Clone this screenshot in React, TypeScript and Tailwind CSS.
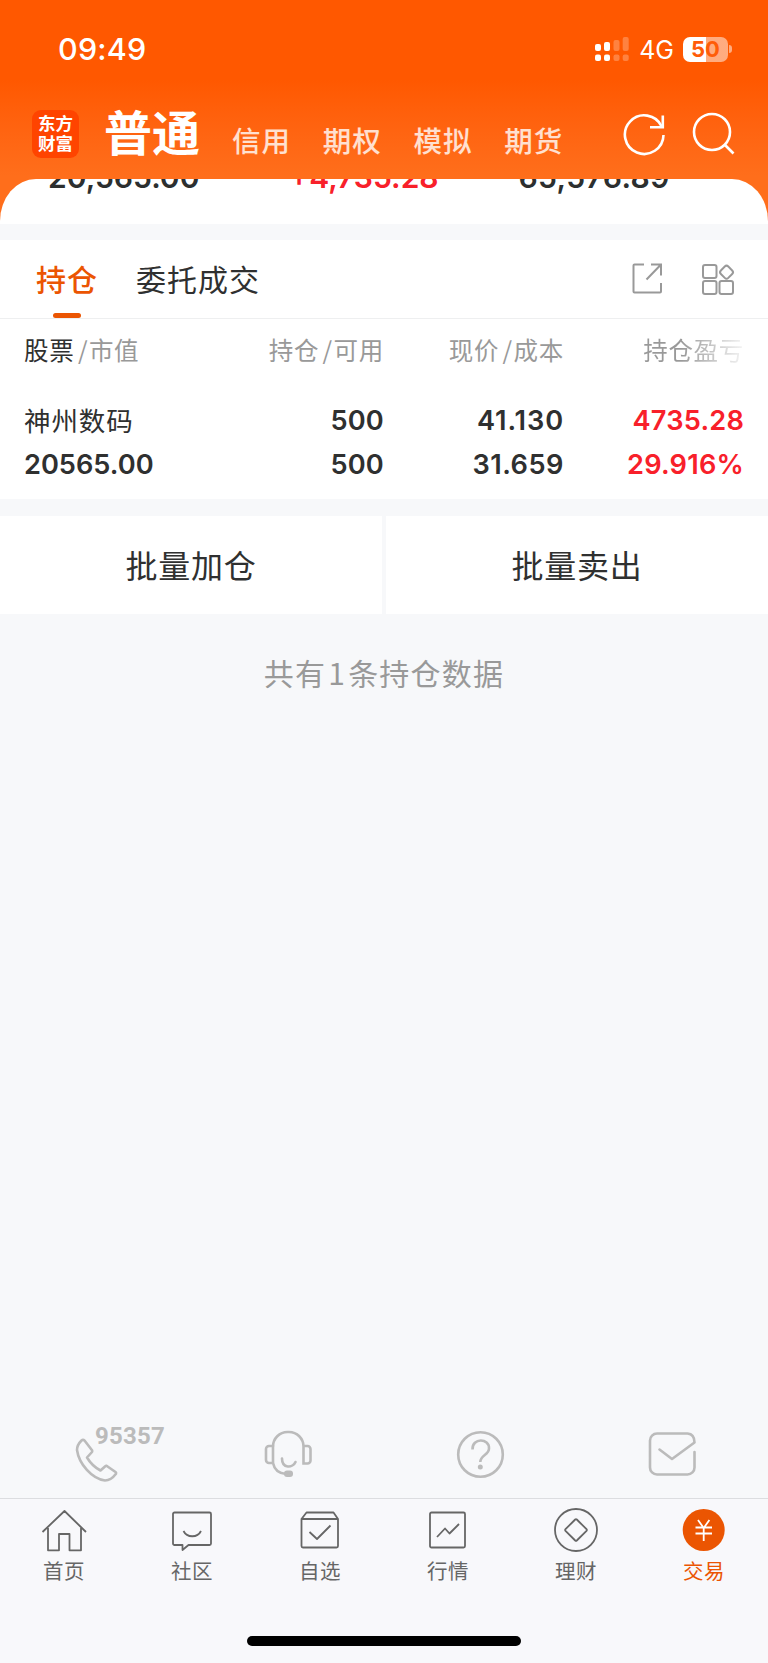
import type { ReactNode } from 'react';

const cjk = "font-['Noto_Sans_CJK_SC',sans-serif]";
const num = "font-['Inter','Noto_Sans_CJK_SC',sans-serif]";

interface Position {
  name: string;
  marketValue: string;
  amount: string;
  available: string;
  price: string;
  cost: string;
  profit: string;
  profitRate: string;
}

const positions: Position[] = [
  {
    name: '神州数码',
    marketValue: '20565.00',
    amount: '500',
    available: '500',
    price: '41.130',
    cost: '31.659',
    profit: '4735.28',
    profitRate: '29.916%',
  },
];

const accountTabs = ['信用', '期权', '模拟', '期货'];

const StatusBar = () => (
  <div className={`${num} flex h-[98px] items-center pl-[58px] pr-[36px] text-white`}>
    <span className="text-[30.500px] font-medium leading-none tracking-[0.200px]">09:49</span>
    <svg className="ml-auto" width="34" height="26" viewBox="0 0 34 26" fill="#fff">
      <rect x="0" y="8" width="6" height="7" rx="2" />
      <rect x="0" y="18.500" width="6" height="6.500" rx="2" />
      <rect x="9" y="6" width="6" height="9" rx="2" />
      <rect x="9" y="18.500" width="6" height="6.500" rx="2" />
      <g opacity="0.25">
        <rect x="18.500" y="4" width="6" height="11" rx="2" />
        <rect x="18.500" y="18.500" width="6" height="6.500" rx="2" />
        <rect x="27.700" y="1" width="6" height="14" rx="2" />
        <rect x="27.700" y="18.500" width="6" height="6.500" rx="2" />
      </g>
    </svg>
    <span className="ml-[10px] mt-[2px] text-[25px] leading-none">4G</span>
    <div className="ml-[9px] flex h-[25px] w-[45px] items-center justify-center overflow-hidden rounded-[7px] bg-linear-to-r from-white from-50% to-white/50 to-50% text-[22px] font-bold leading-none text-[#ff5c08]">
      50
    </div>
    <div className="ml-[1px] h-[8px] w-[3px] rounded-r-full bg-white/50" />
  </div>
);

const Header = () => (
  <div className="h-[224px] bg-linear-to-b from-[#ff5800] from-[80px] to-[#ff6e1b] to-[176px]">
    <StatusBar />
    <div className={`${cjk} flex h-[81px] pl-[32px] text-white`}>
      <div className="mt-[12px] flex h-[48px] w-[47px] flex-col items-center justify-center rounded-[9px] bg-[#ff4400] pb-[2px] text-[17.500px] font-bold leading-[20px]">
        <span>东方</span>
        <span>财富</span>
      </div>
      <span className="ml-[25px] text-[48px] font-bold leading-[64px]">普通</span>
      <div className="ml-[32px] flex gap-[31.700px] text-[28.500px] font-medium leading-[84px] tracking-[1px] text-white/80">
        {accountTabs.map((tab) => (
          <span key={tab}>{tab}</span>
        ))}
      </div>
      <svg className="ml-auto mr-[33px] mt-[12px]" width="112" height="46" viewBox="0 0 112 46" fill="none" stroke="#fff" strokeWidth="2.600">
        <path d="M38.700 16.500A19.300 19.300 0 1 0 40.500 25" />
        <path d="M39.800 5.500v11.800H27" />
        <circle cx="89" cy="22" r="18" />
        <path d="M101.500 34.500l9 9" />
      </svg>
    </div>
    <div className={`${num} relative h-[45px] overflow-hidden rounded-t-[36px_42px] bg-white text-[30px] font-semibold text-[#2c2f2f]`}>
      <div className="-mt-[22px] flex leading-[40px]">
        <span className="ml-[48px] w-[241px]">20,565.00</span>
        <span className="w-[229.500px] text-[#f8202a]">+4,735.28</span>
        <span className="tracking-[0.400px]">65,576.89</span>
      </div>
    </div>
  </div>
);

const PositionTabs = () => (
  <div className={`${cjk} mt-[16px] flex h-[79px] border-b border-[#eeeff0] bg-white pl-[36px] text-[30px] tracking-[1px]`}>
    <div className="flex flex-col items-center">
      <span className="h-[72.500px] font-medium leading-[76px] text-[#eb5502]">持仓</span>
      <span className="mr-[1px] h-[5.500px] w-[28px] shrink-0 rounded-[3px] bg-[#eb5502]" />
    </div>
    <span className="ml-[38px] leading-[76px] text-[#2f3030]">委托成交</span>
    <svg className="ml-auto mr-[32px] mt-[21px]" width="105" height="36" viewBox="0 0 105 36" fill="none" stroke="#999" strokeWidth="2">
      <path d="M13 3.500H3.500a1 1 0 0 0-1 1V30.500a1 1 0 0 0 1 1H29a1 1 0 0 0 1-1V22" />
      <path d="M20 3.500h10v11M30 3.500L15.500 18.500" />
      <rect x="72" y="4" width="13.500" height="13" rx="2" />
      <rect x="72" y="20" width="13.500" height="13" rx="2" />
      <rect x="88.500" y="20" width="13.500" height="13" rx="2" />
      <rect x="90.300" y="6" width="10.500" height="10.500" rx="2.500" transform="rotate(45 95.600 11.200)" />
    </svg>
  </div>
);

const Slash = () => <span className="pl-[3.500px] pr-[0.700px]">/</span>;

const PositionTable = () => (
  <div className={`${cjk} h-[180px] bg-white px-[24px] text-[26px] text-[#2f3030]`}>
    <div className="grid h-[66px] grid-cols-[180px_180px_180px_180px] text-[24.500px] leading-[62px] tracking-[0.700px] text-[#999]">
      <span>
        <span className="text-[#2f3030]">股票</span>
        <Slash />市值
      </span>
      <span className="text-right">
        持仓<Slash />可用
      </span>
      <span className="text-right">
        现价<Slash />成本
      </span>
      <span className="bg-linear-to-r from-[#999] from-[65%] to-[#999]/10 bg-clip-text text-right text-transparent">
        持仓盈亏
      </span>
    </div>
    {positions.map((p) => (
      <div
        key={p.name}
        className={`${num} mt-[14px] grid grid-cols-[180px_180px_180px_180px] text-right text-[27.200px] font-semibold leading-[44px] tracking-[0.200px]`}
      >
        <span className={`${cjk} -mt-[1px] text-left text-[26.500px] font-normal tracking-[0.900px]`}>{p.name}</span>
        <span>{p.amount}</span>
        <span className="tracking-[0.900px]">{p.price}</span>
        <span className="text-[#f8202a]">{p.profit}</span>
        <span className="text-left tracking-normal">{p.marketValue}</span>
        <span>{p.available}</span>
        <span className="tracking-[0.500px]">{p.cost}</span>
        <span className="text-[#f8202a]">{p.profitRate}</span>
      </div>
    ))}
  </div>
);

const BatchActions = () => (
  <div className={`${cjk} mt-[17px] grid h-[98px] grid-cols-2 gap-[4px] text-center text-[32px] leading-[96px] tracking-[0.700px] text-[#2f3030]`}>
    <span className="bg-white">批量加仓</span>
    <span className="bg-white">批量卖出</span>
  </div>
);

const ServiceBar = () => (
  <div className="mt-auto grid h-[86px] grid-cols-4 border-b border-[#dcdde0] text-[#bbb]">
    <div className="relative">
      <svg className="absolute left-[74px] top-[24px]" width="46" height="46" viewBox="0 0 46 46" fill="none" stroke="currentColor" strokeWidth="2.600" strokeLinejoin="round">
        <path d="M7.500 3.500Q3 8 3 13C5 27 18 42 31 43.500Q37 43.500 42 36.800Q42.500 36 41.500 35L32.500 28.800Q31.500 28.500 31 29.500L26.500 33.500Q18 29 13 20.500L18 15Q18.500 14.200 18 13.200L10.500 3.500Q9 2.200 7.500 3.500Z" />
      </svg>
      <span className="absolute left-[95px] top-[10px] font-['Roboto',sans-serif] text-[24px] font-bold leading-[26px] tracking-[0.200px]">
        95357
      </span>
    </div>
    <svg className="ml-[72px] mt-[16px]" width="50" height="50" viewBox="0 0 50 50" fill="none" stroke="currentColor" strokeWidth="2.600" strokeLinecap="round">
      <path d="M9 33V17.500A14.500 14.500 0 0 1 23.500 3H25A14.500 14.500 0 0 1 39.500 17.500V34.500H43.500A3 3 0 0 0 46.500 31.500V20A3 3 0 0 0 43.500 17H39.500" />
      <path d="M9 17H5A3 3 0 0 0 2 20V31A3 3 0 0 0 5 34H9Q11 44 22 45" />
      <path d="M18 29.500C18 40 29 39 31.500 33" />
      <rect x="20" y="41.500" width="9" height="6.500" rx="3" fill="currentColor" stroke="none" />
    </svg>
    <svg className="ml-[72px] mt-[16px]" width="50" height="50" viewBox="0 0 50 50" fill="none" stroke="currentColor" strokeWidth="2.600">
      <circle cx="24.500" cy="25.500" r="22.300" />
      <path d="M16.500 20.500C16 8.500 33.500 9 33 19.500 33 26 24.300 26 24.300 33" />
      <circle cx="24.300" cy="38" r="2.500" fill="currentColor" stroke="none" />
    </svg>
    <svg className="ml-[72px] mt-[16px]" width="50" height="50" viewBox="0 0 50 50" fill="none" stroke="currentColor" strokeWidth="2.600" strokeLinecap="round" strokeLinejoin="round">
      <path d="M46.500 23V38.500a7 7 0 0 1-7 7H9a7 7 0 0 1-7-7V11.500a7 7 0 0 1 7-7H39.500Q46.500 5 46.500 13.500L24 30 11.500 20.500" />
    </svg>
  </div>
);

const navItems: { label: string; icon: ReactNode; active?: boolean }[] = [
  {
    label: '首页',
    icon: <path d="M2.500 24L24.500 3 46 24M8 20V42.300H19V26H29.500V42.300H41V20" />,
  },
  {
    label: '社区',
    icon: (
      <>
        <path d="M6.500 4.500H41.500a1.500 1.500 0 0 1 1.500 1.500V35.500a1.500 1.500 0 0 1-1.500 1.500H20.500L14.500 42V37H6.500A1.500 1.500 0 0 1 5 35.500V6A1.500 1.500 0 0 1 6.500 4.500Z" />
        <path d="M15.500 23C19 30 29.500 30 33 23" />
      </>
    ),
  },
  {
    label: '自选',
    icon: (
      <>
        <path d="M5.500 11L10.500 4.500H37.500L42 11M5.500 11H42V38a1.500 1.500 0 0 1-1.500 1.500H7A1.500 1.500 0 0 1 5.500 38Z" />
        <path d="M13.500 24L21 31 34.500 17.500" />
      </>
    ),
  },
  {
    label: '行情',
    icon: (
      <>
        <rect x="6" y="4.500" width="35" height="35" rx="1.500" />
        <path d="M13 29L21 20.500 25.500 25.500 35 16" />
      </>
    ),
  },
  {
    label: '理财',
    icon: (
      <>
        <circle cx="24" cy="22" r="21" />
        <path d="M23.200 11.500L13.500 21.200a1.200 1.200 0 0 0 0 1.600L23.200 32.500a1.200 1.200 0 0 0 1.600 0L34.500 22.800a1.200 1.200 0 0 0 0-1.600L24.800 11.500a1.200 1.200 0 0 0-1.600 0Z" />
      </>
    ),
  },
  {
    label: '交易',
    active: true,
    icon: (
      <>
        <circle cx="23.700" cy="22" r="21" fill="#eb5502" stroke="none" />
        <path d="M18 12L23.700 20 29.400 12M15.500 19.500H32M15.500 25.500H32M23.700 19.500V33" stroke="#fff" />
      </>
    ),
  },
];

const BottomNav = () => (
  <div className={`${cjk} h-[164px] bg-[#f8f8fb]`}>
    <div className="grid h-[137px] grid-cols-6">
      {navItems.map((item) => (
        <div
          key={item.label}
          className={`flex flex-col items-center ${item.active ? 'text-[#eb5502]' : 'text-[#666]'}`}
        >
          <svg className="mt-[9px]" width="48" height="46" viewBox="0 0 48 46" fill="none" stroke={item.active ? 'none' : '#666'} strokeWidth="1.800" strokeLinejoin="round">
            {item.icon}
          </svg>
          <span className="text-[20.500px] leading-[33px] tracking-[0.400px]">{item.label}</span>
        </div>
      ))}
    </div>
    <div className="mx-auto h-[10px] w-[274px] rounded-full bg-black" />
  </div>
);

const App = () => (
  <div className="flex h-[1663px] w-[768px] flex-col overflow-hidden bg-[#f7f8fa]">
    <Header />
    <PositionTabs />
    <PositionTable />
    <BatchActions />
    <p className={`${cjk} mt-[36px] text-center text-[30px] leading-[44px] tracking-[1.200px] text-[#999]`}>
      共有<span className="px-[2px]">1</span>条持仓数据
    </p>
    <ServiceBar />
    <BottomNav />
  </div>
);

export default App;
